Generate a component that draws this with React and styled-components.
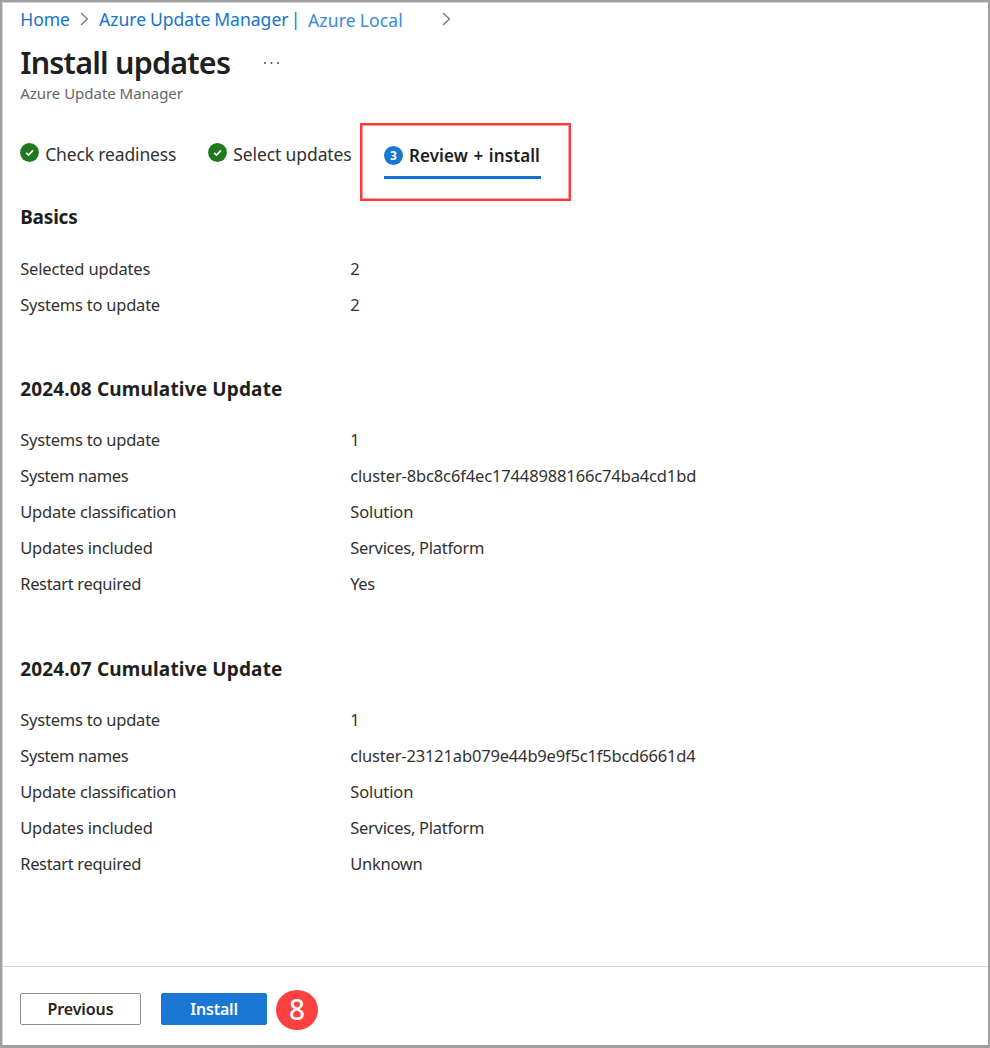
import React from "react";
import styled, { createGlobalStyle } from "styled-components";

const GlobalStyle = createGlobalStyle`
  * { box-sizing: border-box; }
  body {
    margin: 0;
    background: #fff;
    font-family: "Segoe UI", "Noto Sans", "Open Sans", sans-serif;
    font-size: 16px;
    color: #323130;
  }
`;

const Page = styled.div`
  display: flex;
  flex-direction: column;
  width: 990px;
  height: 1048px;
  border: 2px solid #a0a0a0;
  border-bottom-width: 3px;
  background: #fff;
  box-shadow: inset 1px 1px 0 #d4d4d4;
  white-space: nowrap;
`;

const Main = styled.main`
  flex: 1;
  padding: 5px 18px 0 18.2px;
`;

const Breadcrumb = styled.nav`
  display: flex;
  align-items: center;
  height: 24px;
`;

const Crumb = styled.a`
  width: ${(p) => p.$width}px;
  margin-left: ${(p) => p.$gap || 0}px;
  padding-top: ${(p) => (p.$soft ? 1 : 0)}px;
  color: ${(p) => (p.$soft ? "#3a8ad9" : "#1473d0")};
  font-size: 17.5px;
  letter-spacing: ${(p) => p.$track || 0}px;
  word-spacing: -0.8px;
`;

const Divider = styled.span`
  margin-left: -1.5px;
`;

const Chevron = styled.svg`
  width: 9px;
  height: 14px;
  margin-left: ${(p) => p.$gap}px;
  fill: none;
  stroke: #767472;
  stroke-width: 1.2;
`;

const TitleRow = styled.div`
  display: flex;
  align-items: center;
  height: 46px;
  margin-top: 8px;
`;

const Title = styled.h1`
  width: 243px;
  margin: 0;
  color: #201f1e;
  font-size: 30.5px;
  font-weight: 600;
  letter-spacing: ${(p) => p.$track}px;
`;

const MoreIcon = styled.svg`
  width: 17px;
  height: 4px;
  margin-top: 1px;
  fill: #4a4948;
`;

const Subtitle = styled.div`
  height: 22px;
  line-height: 22px;
  margin-top: -3px;
  color: #666462;
  font-size: 15px;
  letter-spacing: ${(p) => p.$track}px;
`;

const Steps = styled.div`
  display: flex;
  height: 78px;
  margin-top: 19px;
`;

const Step = styled.div`
  display: flex;
  align-items: center;
  width: ${(p) => p.$width}px;
  height: 61px;
  font-size: 17.5px;
  letter-spacing: ${(p) => p.$track}px;
`;

const StepIcon = styled.svg`
  width: 19px;
  height: 19px;
  margin: -2px 6px 0 0;
`;

const Callout = styled.div`
  width: 211px;
  height: 78px;
  padding: 14px 0 0 22px;
  border: 2px solid #fd3a3a;
  box-shadow: inset 0 0 0 1px rgba(253, 58, 58, 0.5);
`;

const ActiveStep = styled.div`
  display: flex;
  align-items: center;
  width: 156.6px;
  height: 40px;
  padding-bottom: 5px;
  border-bottom: 3px solid #1570cf;
  color: #201f1e;
  font-size: 17px;
  font-weight: 600;
  letter-spacing: ${(p) => p.$track}px;
  word-spacing: 1px;
`;

const StepNumber = styled.span`
  display: flex;
  align-items: center;
  justify-content: center;
  width: 19px;
  height: 19px;
  margin-right: 6px;
  border-radius: 50%;
  background: #1976d2;
  color: #fff;
  font-size: 12px;
  font-weight: 700;
  letter-spacing: 0;
`;

const Section = styled.section`
  margin-top: ${(p) => p.$top}px;
`;

const SectionTitle = styled.h2`
  height: 36px;
  margin: 0 0 ${(p) => p.$bottom}px;
  color: #201f1e;
  font-size: 19px;
  font-weight: 700;
  line-height: 36px;
  letter-spacing: ${(p) => p.$track}px;
`;

const Row = styled.div`
  display: grid;
  grid-template-columns: 330px 1fr;
  height: 36px;
  font-size: 16.5px;
  line-height: 36px;
`;

const Cell = styled.span`
  letter-spacing: ${(p) => p.$track || 0}px;
`;

const Footer = styled.footer`
  display: flex;
  align-items: center;
  height: 79px;
  padding: 5px 18px 0;
  border-top: 1px solid #d6d6d6;
`;

const Button = styled.button`
  width: ${(p) => p.$width}px;
  height: 32px;
  margin: 0 20px 0 0;
  padding: 0;
  border: 1px solid ${(p) => (p.$primary ? "#1976d2" : "#8f8d8b")};
  border-radius: 2px;
  background: ${(p) => (p.$primary ? "#1976d2" : "#fff")};
  color: ${(p) => (p.$primary ? "#fff" : "#252423")};
  font: 600 16px "Segoe UI", "Noto Sans", sans-serif;
  letter-spacing: ${(p) => p.$track}px;
`;

const Marker = styled.span`
  display: flex;
  align-items: center;
  justify-content: center;
  width: 42px;
  height: 40px;
  margin: 2px 0 0 -11px;
  padding-bottom: 1px;
  border-radius: 50%;
  background: #fd4040;
  color: #fff;
  font-size: 28px;
  font-weight: 500;
`;

const sections = [
  {
    title: "Basics", top: -2, bottom: 16, track: -0.2,
    rows: [["Selected updates", "2"], ["Systems to update", "2"]],
  },
  {
    title: "2024.08 Cumulative Update", top: 48, bottom: 15, track: 0.16,
    rows: [
      ["Systems to update", "1"],
      ["System names", "cluster-8bc8c6f4ec17448988166c74ba4cd1bd"],
      ["Update classification", "Solution"],
      ["Updates included", "Services, Platform"],
      ["Restart required", "Yes"],
    ],
  },
  {
    title: "2024.07 Cumulative Update", top: 49, bottom: 15, track: 0.16,
    rows: [
      ["Systems to update", "1"],
      ["System names", "cluster-23121ab079e44b9e9f5c1f5bcd6661d4"],
      ["Update classification", "Solution"],
      ["Updates included", "Services, Platform"],
      ["Restart required", "Unknown"],
    ],
  },
];

const tracking = {
  "Selected updates": -0.15,
  "Systems to update": -0.22,
  "System names": -0.37,
  "Update classification": -0.2,
  "Updates included": -0.19,
  "Restart required": -0.32,
  "Services, Platform": -0.28,
  "cluster-8bc8c6f4ec17448988166c74ba4cd1bd": -0.14,
  "cluster-23121ab079e44b9e9f5c1f5bcd6661d4": -0.17,
  Solution: -0.1,
  Unknown: -0.25,
  Yes: -0.4,
};

function BreadcrumbChevron({ gap }) {
  return (
    <Chevron $gap={gap} viewBox="0 0 9 14">
      <path d="M1 1l6.5 6L1 13" />
    </Chevron>
  );
}

function CheckIcon() {
  return (
    <StepIcon viewBox="0 0 19 19">
      <circle cx="9.5" cy="9.5" r="9.4" fill="#1f7a1f" />
      <path d="M6.2 9.8l2.3 2.2 4.5-4.6" fill="none" stroke="#fff" strokeWidth="1.7" />
    </StepIcon>
  );
}

export default function App() {
  return (
    <Page>
      <GlobalStyle />
      <Main>
        <Breadcrumb>
          <Crumb $width={50}>Home</Crumb>
          <BreadcrumbChevron gap={9.8} />
          <Crumb $gap={10} $width={209} $track={0.03}>Azure Update Manager <Divider>|</Divider></Crumb>
          <Crumb $width={95} $track={0.16} $soft>Azure Local</Crumb>
          <BreadcrumbChevron gap={39} />
        </Breadcrumb>
        <TitleRow>
          <Title $track={-0.8}>Install updates</Title>
          <MoreIcon viewBox="0 0 17 4">
            <circle cx="2" cy="2" r="1" />
            <circle cx="8.5" cy="2" r="1" />
            <circle cx="15" cy="2" r="1" />
          </MoreIcon>
        </TitleRow>
        <Subtitle $track={-0.03}>Azure Update Manager</Subtitle>
        <Steps>
          <Step $width={188} $track={-0.15}><CheckIcon />Check readiness</Step>
          <Step $width={151.8} $track={-0.1}><CheckIcon />Select updates</Step>
          <Callout>
            <ActiveStep $track={0.1}><StepNumber>3</StepNumber>Review + install</ActiveStep>
          </Callout>
        </Steps>
        {sections.map((s) => (
          <Section key={s.title} $top={s.top}>
            <SectionTitle $bottom={s.bottom} $track={s.track}>{s.title}</SectionTitle>
            {s.rows.map(([label, value]) => (
              <Row key={label}>
                <Cell $track={tracking[label]}>{label}</Cell>
                <Cell $track={tracking[value]}>{value}</Cell>
              </Row>
            ))}
          </Section>
        ))}
      </Main>
      <Footer>
        <Button $width={121} $track={-0.1}>Previous</Button>
        <Button $width={106} $primary $track={-0.2}>Install</Button>
        <Marker>8</Marker>
      </Footer>
    </Page>
  );
}
